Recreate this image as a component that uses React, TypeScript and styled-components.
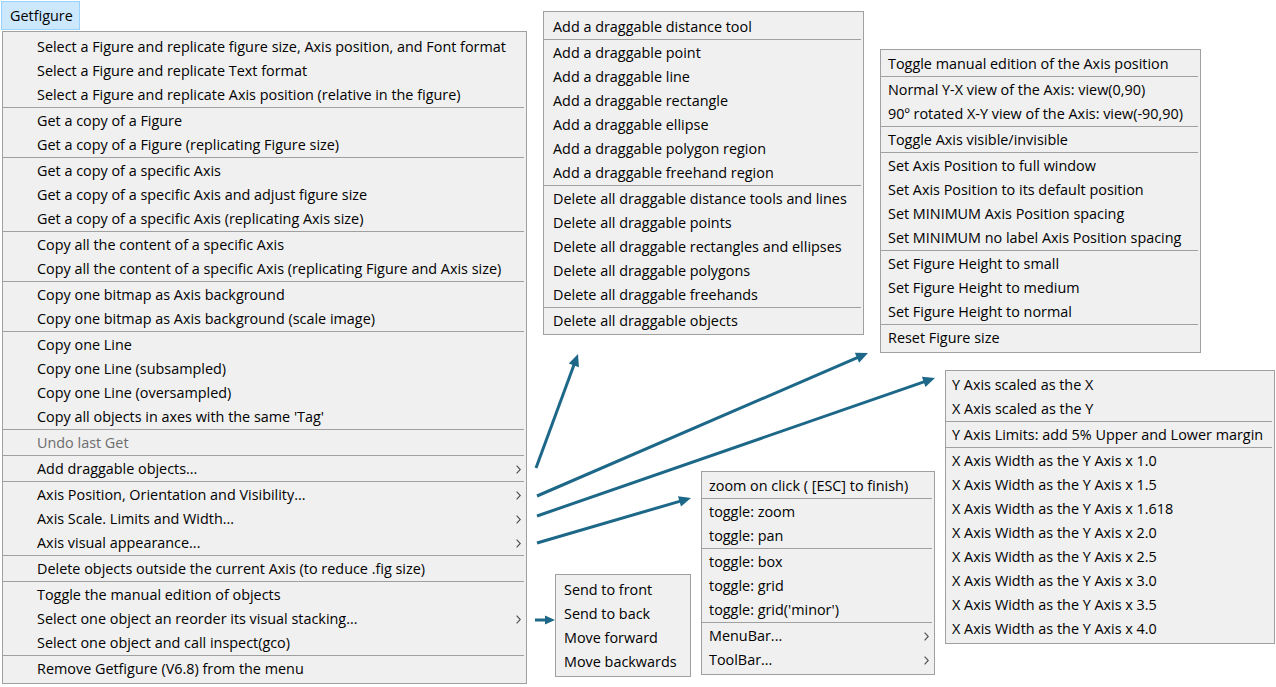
import React from "react";
import styled, { createGlobalStyle } from "styled-components";

const GlobalStyle = createGlobalStyle`
  html, body { margin: 0; padding: 0; background: #ffffff; }
  body {
    font-family: "Open Sans", "Noto Sans", "Liberation Sans", sans-serif;
    font-size: 14.4px;
    color: #000;
  }
`;

type Item = { label: string; sub?: boolean; disabled?: boolean };
type Group = Item[];

const it = (label: string, extra: Partial<Item> = {}): Item => ({ label, ...extra });

const mainMenu: Group[] = [
  [
    it("Select a Figure and replicate figure size, Axis position, and Font format"),
    it("Select a Figure and replicate Text format"),
    it("Select a Figure and replicate Axis position (relative in the figure)"),
  ],
  [it("Get a copy of a Figure"), it("Get a copy of a Figure (replicating Figure size)")],
  [
    it("Get a copy of a specific Axis"),
    it("Get a copy of a specific Axis and adjust figure size"),
    it("Get a copy of a specific Axis (replicating Axis size)"),
  ],
  [
    it("Copy all the content of a specific Axis"),
    it("Copy all the content of a specific Axis (replicating Figure and Axis size)"),
  ],
  [it("Copy one bitmap as Axis background"), it("Copy one bitmap as Axis background (scale image)")],
  [
    it("Copy one Line"),
    it("Copy one Line (subsampled)"),
    it("Copy one Line (oversampled)"),
    it("Copy all objects in axes with the same 'Tag'"),
  ],
  [it("Undo last Get", { disabled: true })],
  [it("Add draggable objects...", { sub: true })],
  [
    it("Axis Position, Orientation and Visibility...", { sub: true }),
    it("Axis Scale. Limits and Width...", { sub: true }),
    it("Axis visual appearance...", { sub: true }),
  ],
  [it("Delete objects outside the current Axis (to reduce .fig size)")],
  [
    it("Toggle the manual edition of objects"),
    it("Select one object an reorder its visual stacking...", { sub: true }),
    it("Select one object and call inspect(gco)"),
  ],
  [it("Remove Getfigure (V6.8) from the menu")],
];

const draggableMenu: Group[] = [
  [it("Add a draggable distance tool")],
  [
    it("Add a draggable point"),
    it("Add a draggable line"),
    it("Add a draggable rectangle"),
    it("Add a draggable ellipse"),
    it("Add a draggable polygon region"),
    it("Add a draggable freehand region"),
  ],
  [
    it("Delete all draggable distance tools and lines"),
    it("Delete all draggable points"),
    it("Delete all draggable rectangles and ellipses"),
    it("Delete all draggable polygons"),
    it("Delete all draggable freehands"),
  ],
  [it("Delete all draggable objects")],
];

const positionMenu: Group[] = [
  [it("Toggle manual edition of the Axis position")],
  [it("Normal Y-X view of the Axis: view(0,90)"), it("90º rotated X-Y view of the Axis: view(-90,90)")],
  [it("Toggle Axis visible/invisible")],
  [
    it("Set Axis Position to full window"),
    it("Set Axis Position to its default position"),
    it("Set MINIMUM Axis Position spacing"),
    it("Set MINIMUM no label Axis Position spacing"),
  ],
  [it("Set Figure Height to small"), it("Set Figure Height to medium"), it("Set Figure Height to normal")],
  [it("Reset Figure size")],
];

const scaleMenu: Group[] = [
  [it("Y Axis scaled as the X"), it("X Axis scaled as the Y")],
  [it("Y Axis Limits: add 5% Upper and Lower margin")],
  ["1.0", "1.5", "1.618", "2.0", "2.5", "3.0", "3.5", "4.0"].map((v) =>
    it(`X Axis Width as the Y Axis x ${v}`)
  ),
];

const visualMenu: Group[] = [
  [it("zoom on click ( [ESC] to finish)")],
  [it("toggle: zoom"), it("toggle: pan")],
  [it("toggle: box"), it("toggle: grid"), it("toggle: grid('minor')")],
  [it("MenuBar...", { sub: true }), it("ToolBar...", { sub: true })],
];

const stackMenu: Group[] = [
  [it("Send to front"), it("Send to back"), it("Move forward"), it("Move backwards")],
];

/* ---------- styled parts ---------- */

const Canvas = styled.div`
  position: relative;
  width: 1276px;
  height: 687px;
  overflow: hidden;
  background: #ffffff;
`;

const MainColumn = styled.div`
  display: flex;
  flex-direction: column;
  align-items: flex-start;
  padding: 1px 0 0 1px;
`;

const MenuTitle = styled.div`
  box-sizing: border-box;
  width: 79px;
  height: 29px;
  display: flex;
  align-items: center;
  padding-left: 8px;
  background: #cce8ff;
  border: 1px solid #99d1ff;
  color: #000;
`;

const Panel = styled.div<{ $w: number; $pl: number; $pt: number; $pb: number }>`
  box-sizing: border-box;
  width: ${(p) => p.$w}px;
  background: #f0f0f0;
  border: 1px solid #a0a0a0;
  padding: ${(p) => p.$pt}px 0 ${(p) => p.$pb}px 0;
  display: flex;
  flex-direction: column;
  --pl: ${(p) => p.$pl}px;
`;

const MainPanel = styled(Panel)`
  margin: 1px 0 0 1px;
`;

const FloatingPanel = styled(Panel)<{ $x: number; $y: number }>`
  position: absolute;
  left: ${(p) => p.$x}px;
  top: ${(p) => p.$y}px;
`;

const Row = styled.div<{ $disabled?: boolean }>`
  box-sizing: border-box;
  height: 24px;
  display: flex;
  align-items: center;
  justify-content: space-between;
  padding: 0 5px 0 var(--pl);
  white-space: nowrap;
  color: ${(p) => (p.$disabled ? "#6d6d6d" : "#000")};
`;

const Label = styled.span`
  line-height: 24px;
`;

const Separator = styled.div`
  height: 2px;
  margin-right: 2px;
  border-top: 1px solid #a0a0a0;
  box-sizing: border-box;
`;

const ChevronSvg = styled.svg`
  flex: none;
  width: 5px;
  height: 9px;
`;

const ArrowLayer = styled.svg`
  position: absolute;
  left: 0;
  top: 0;
  pointer-events: none;
`;

/* ---------- components ---------- */

const Chevron = () => (
  <ChevronSvg viewBox="0 0 5 9">
    <polyline points="0.6,0.6 4.3,4.5 0.6,8.4" fill="none" stroke="#4a4a4a" strokeWidth="1.1" />
  </ChevronSvg>
);

const MenuBody = ({ groups }: { groups: Group[] }) => (
  <>
    {groups.map((g, gi) => (
      <React.Fragment key={gi}>
        {gi > 0 && <Separator />}
        {g.map((item) => (
          <Row key={item.label} $disabled={item.disabled}>
            <Label>{item.label}</Label>
            {item.sub && <Chevron />}
          </Row>
        ))}
      </React.Fragment>
    ))}
  </>
);

type ArrowDef = { x1: number; y1: number; x2: number; y2: number; head?: number };

const arrows: ArrowDef[] = [
  { x1: 536, y1: 468, x2: 578, y2: 354 },
  { x1: 537, y1: 496, x2: 868, y2: 353 },
  { x1: 537, y1: 516, x2: 935, y2: 378 },
  { x1: 537, y1: 543, x2: 691, y2: 498 },
  { x1: 535, y1: 620, x2: 555, y2: 620, head: 10 },
];

const ARROW_COLOR = "#1d6888";

const Arrow = ({ x1, y1, x2, y2, head = 12 }: ArrowDef) => {
  const dx = x2 - x1;
  const dy = y2 - y1;
  const len = Math.hypot(dx, dy);
  const ux = dx / len;
  const uy = dy / len;
  const bx = x2 - ux * head;
  const by = y2 - uy * head;
  const hw = head * 0.45;
  const px = -uy * hw;
  const py = ux * hw;
  return (
    <g>
      <line
        x1={x1}
        y1={y1}
        x2={bx + ux * 1}
        y2={by + uy * 1}
        stroke={ARROW_COLOR}
        strokeWidth={3}
      />
      <polygon
        points={`${x2},${y2} ${bx + px},${by + py} ${bx - px},${by - py}`}
        fill={ARROW_COLOR}
      />
    </g>
  );
};

export default function App() {
  return (
    <>
      <GlobalStyle />
      <Canvas>
        <MainColumn>
          <MenuTitle>Getfigure</MenuTitle>
          <MainPanel $w={525} $pl={34} $pt={3} $pb={2}>
            <MenuBody groups={mainMenu} />
          </MainPanel>
        </MainColumn>

        <FloatingPanel $x={543} $y={11} $w={321} $pl={9} $pt={3} $pb={1}>
          <MenuBody groups={draggableMenu} />
        </FloatingPanel>

        <FloatingPanel $x={880} $y={49} $w={321} $pl={7} $pt={2} $pb={2}>
          <MenuBody groups={positionMenu} />
        </FloatingPanel>

        <FloatingPanel $x={945} $y={370} $w={330} $pl={6} $pt={2} $pb={2}>
          <MenuBody groups={scaleMenu} />
        </FloatingPanel>

        <FloatingPanel $x={701} $y={471} $w={234} $pl={7} $pt={2} $pb={2}>
          <MenuBody groups={visualMenu} />
        </FloatingPanel>

        <FloatingPanel $x={555} $y={574} $w={136} $pl={8} $pt={3} $pb={2}>
          <MenuBody groups={stackMenu} />
        </FloatingPanel>

        <ArrowLayer width={1276} height={687} viewBox="0 0 1276 687">
          {arrows.map((a, i) => (
            <Arrow key={i} {...a} />
          ))}
        </ArrowLayer>
      </Canvas>
    </>
  );
}
